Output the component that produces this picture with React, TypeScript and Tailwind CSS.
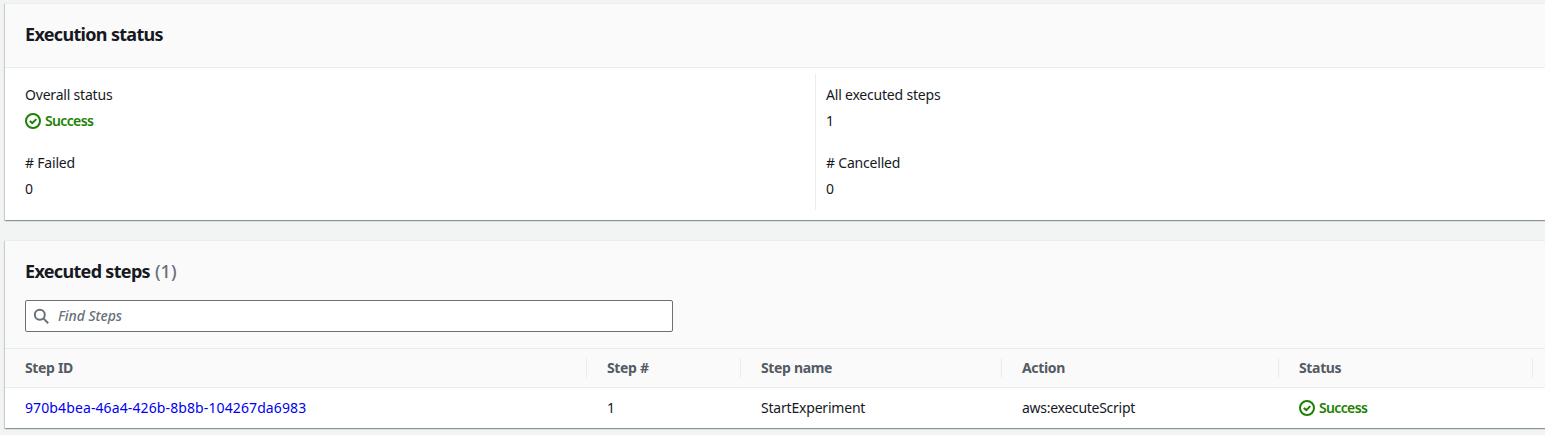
import type { ReactNode } from 'react';

function Success() {
  return (
    <span className="flex items-center gap-1 font-semibold tracking-[-0.65px] text-[#1d8102]">
      <svg className="h-4 w-4 shrink-0" viewBox="0 0 16 16" fill="none" stroke="currentColor" strokeWidth="2">
        <circle cx="8" cy="8" r="7" />
        <path d="M4.8 7.9 7.3 10.1 11.3 6.1" />
      </svg>
      Success
    </span>
  );
}

function Field({ label, children }: { label: string; children: ReactNode }) {
  return (
    <div className="h-[68px] leading-[22px]">
      <div className="mb-1">{label}</div>
      <div>{children}</div>
    </div>
  );
}

function Th({ children, divider = true }: { children?: ReactNode; divider?: boolean }) {
  return (
    <div className="flex h-[38px] items-center">
      {divider && <span className="h-5 w-px bg-[#eaeded]" />}
      <span className="pb-0.5 pl-5 font-bold tracking-[-0.35px] text-[#545b64]">{children}</span>
    </div>
  );
}

const card =
  'ml-[5px] w-[1560px] border-t border-[#eaeded] bg-white shadow-[0_1px_1px_0_rgba(0,28,36,0.25),1px_1px_1px_0_rgba(0,28,36,0.13),-1px_1px_1px_0_rgba(0,28,36,0.13)]';
const cols = 'grid grid-cols-[581px_154px_261px_277px_254px_1fr]';

export default function App() {
  return (
    <div className="h-[435px] w-full overflow-hidden bg-[#f2f3f3] pt-[3px] font-['Noto_Sans',sans-serif] text-[14px] tracking-[-0.2px] text-[#16191f]">
      <section className={`${card} h-[217px]`}>
        <div className="flex h-16 items-center border-b border-[#eaeded] bg-[#fafafa] pb-[3px] pl-5">
          <h2 className="text-[18px] leading-[22px] font-bold tracking-[-0.68px]">Execution status</h2>
        </div>
        <div className="grid grid-cols-[810px_1fr] pt-[6px]">
          <div className="h-[136px] pt-[10px] pl-5">
            <Field label="Overall status"><Success /></Field>
            <Field label="# Failed">0</Field>
          </div>
          <div className="h-[136px] border-l border-[#eaeded] pt-[10px] pl-[10px]">
            <Field label="All executed steps">1</Field>
            <Field label="# Cancelled">0</Field>
          </div>
        </div>
      </section>
      <section className={`${card} mt-5 h-[188px]`}>
        <div className="h-[108px] border-b border-[#eaeded] bg-[#fafafa] pt-[19px] pl-5">
          <h2 className="text-[18px] leading-[22px] font-bold tracking-[-0.68px]">
            Executed steps <span className="ml-px font-medium tracking-[0px] text-[#687078]">(1)</span>
          </h2>
          <div className="mt-[18px] flex h-8 w-[648px] items-center rounded-[2px] border border-[#687078] bg-white pl-[7px] text-[#687078]">
            <svg className="h-4 w-4" viewBox="0 0 16 16" fill="none" stroke="currentColor" strokeWidth="2">
              <circle cx="6.8" cy="6.8" r="5" />
              <path d="m10.4 10.4 4.8 4.8" />
            </svg>
            <span className="ml-[9px] pb-0.5 font-medium tracking-[-0.05px] italic">Find Steps</span>
          </div>
        </div>
        <div className={`${cols} h-[39px] border-b border-[#eaeded] bg-[#fafafa]`}>
          <Th divider={false}>Step ID</Th>
          <Th>Step #</Th>
          <Th>Step name</Th>
          <Th>Action</Th>
          <Th>Status</Th>
          <Th />
        </div>
        <div className={`${cols} h-[39px] items-center leading-[22px]`}>
          <a className="pl-5 tracking-[0.11px] text-[#0000ee]">970b4bea-46a4-426b-8b8b-104267da6983</a>
          <span className="pl-[21px]">1</span>
          <span className="pl-[21px]">StartExperiment</span>
          <span className="pl-[21px] tracking-[-0.28px]">aws:executeScript</span>
          <span className="pl-[21px]"><Success /></span>
        </div>
      </section>
    </div>
  );
}
